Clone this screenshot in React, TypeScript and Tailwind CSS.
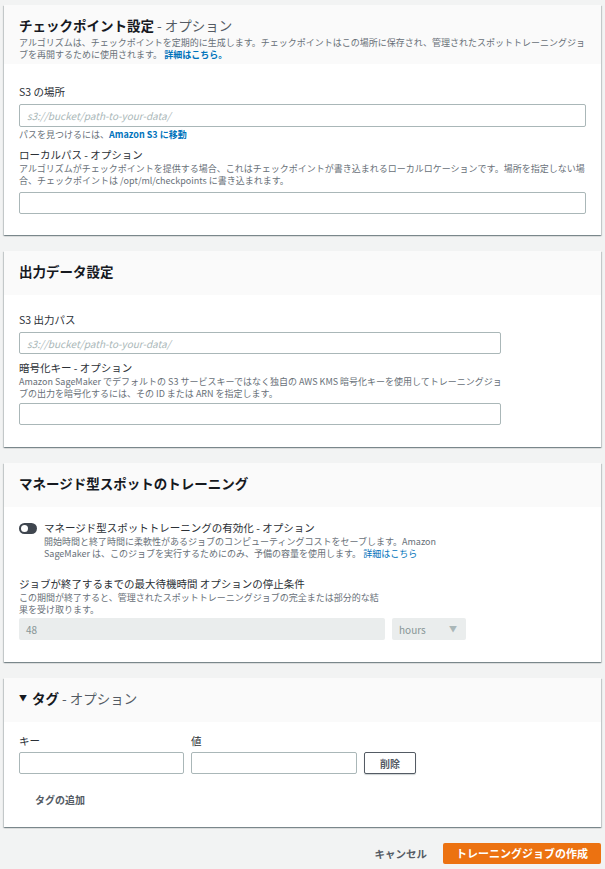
import React from 'react';

const Card: React.FC<{ header: React.ReactNode; headerClass?: string; bodyClass?: string; children: React.ReactNode }> = ({
  header,
  headerClass = 'pt-[11px] pb-[15px]',
  bodyClass = '',
  children,
}) => (
  <section className="bg-white shadow-[0_1px_1px_0_rgba(0,28,36,0.3),1px_1px_1px_0_rgba(0,28,36,0.15),-1px_1px_1px_0_rgba(0,28,36,0.15)]">
    <div className={`bg-[#fafafa] px-[15px] ${headerClass}`}>{header}</div>
    <div className={`px-[15px] ${bodyClass}`}>{children}</div>
  </section>
);

const Title: React.FC<{ main: string; opt?: boolean }> = ({ main, opt }) => (
  <h2 className="text-[13.5px] leading-[18px] font-bold text-[#16191f]">
    {main}
    {opt && <span className="font-normal text-[#545b64]"> - オプション</span>}
  </h2>
);

const Label: React.FC<{ children: React.ReactNode; className?: string }> = ({ children, className = '' }) => (
  <div className={`text-[10.5px] leading-[14px] text-[#2b3036] ${className}`}>{children}</div>
);

const Desc: React.FC<{ children: React.ReactNode; className?: string }> = ({ children, className = '' }) => (
  <p className={`text-[9px] leading-[11.5px] text-[#687078] whitespace-nowrap ${className}`}>{children}</p>
);

const Input: React.FC<{ className?: string; placeholder?: string }> = ({ className = '', placeholder }) => (
  <input
    placeholder={placeholder}
    className={`block h-[22px] border border-[#aab7b8] rounded-[2px] bg-white px-[7px] text-[10px] text-[#16191f] placeholder:italic placeholder:text-[#aab7b8] outline-none ${className}`}
  />
);

export default function App() {
  return (
    <div className="min-h-screen bg-[#f2f3f3] px-[4px] pt-[5px] pb-[5px] font-['Noto_Sans_CJK_JP',sans-serif]">
      <div className="flex flex-col gap-[16px]">
        <Card
          headerClass="pt-[11px] pb-[4px]"
          bodyClass="pt-[21px] pb-[21px]"
          header={
            <>
              <Title main="チェックポイント設定" opt />
              <Desc className="mt-[3px]">
                アルゴリズムは、チェックポイントを定期的に生成します。チェックポイントはこの場所に保存され、管理されたスポットトレーニングジョ
                <br />
                ブを再開するために使用されます。 <span className="font-bold text-[#0073bb]">詳細はこちら。</span>
              </Desc>
            </>
          }
        >
          <Label>S3 の場所</Label>
          <Input className="mt-[5px] w-full h-[23px]" placeholder="s3://bucket/path-to-your-data/" />
          <Desc className="mt-[2px] leading-[12px]">
            パスを見つけるには、<span className="font-bold text-[#0073bb]">Amazon S3 に移動</span>
          </Desc>
          <Label className="mt-[7px]">ローカルパス - オプション</Label>
          <Desc className="mt-[1px] leading-[12px]">
            アルゴリズムがチェックポイントを提供する場合、これはチェックポイントが書き込まれるローカルロケーションです。場所を指定しない場
            <br />
            合、チェックポイントは /opt/ml/checkpoints に書き込まれます。
          </Desc>
          <Input className="mt-[5px] w-full" />
        </Card>

        <Card header={<Title main="出力データ設定" />} bodyClass="pt-[18px] pb-[22px]">
          <Label>S3 出力パス</Label>
          <Input className="mt-[5px] w-[482px]" placeholder="s3://bucket/path-to-your-data/" />
          <Label className="mt-[7px]">暗号化キー - オプション</Label>
          <Desc className="mt-[1px]">
            Amazon SageMaker でデフォルトの S3 サービスキーではなく独自の AWS KMS 暗号化キーを使用してトレーニングジョ
            <br />
            ブの出力を暗号化するには、その ID または ARN を指定します。
          </Desc>
          <Input className="mt-[4px] w-[482px]" />
        </Card>

        <Card header={<Title main="マネージド型スポットのトレーニング" />} bodyClass="pt-[14px] pb-[22px]">
          <div className="flex gap-[7px]">
            <div className="mt-[1.5px] w-[18px] h-[11px] rounded-full bg-[#3f464f] flex items-center px-[2px] shrink-0">
              <div className="w-[7px] h-[7px] rounded-full bg-white" />
            </div>
            <div>
              <Label>マネージド型スポットトレーニングの有効化 - オプション</Label>
              <Desc className="mt-[1px] leading-[12px]">
                開始時間と終了時間に柔軟性があるジョブのコンピューティングコストをセーブします。Amazon
                <br />
                SageMaker は、このジョブを実行するためにのみ、予備の容量を使用します。 <span className="text-[#0073bb]">詳細はこちら</span>
              </Desc>
            </div>
          </div>
          <Label className="mt-[17px]">ジョブが終了するまでの最大待機時間 オプションの停止条件</Label>
          <Desc className="mt-[1px]">
            この期間が終了すると、管理されたスポットトレーニングジョブの完全または部分的な結
            <br />
            果を受け取ります。
          </Desc>
          <div className="mt-[3px] flex gap-[7px]">
            <div className="w-[366px] h-[22px] rounded-[2px] bg-[#eaeded] px-[7px] flex items-center text-[10px] text-[#879596]">
              48
            </div>
            <div className="w-[74px] h-[22px] rounded-[2px] bg-[#eaeded] pl-[7px] pr-[9px] flex items-center justify-between text-[10px] text-[#879596]">
              <span>hours</span>
              <span className="text-[8px] text-[#aab7b8]">▼</span>
            </div>
          </div>
        </Card>

        <Card
          header={
            <h2 className="text-[13.5px] leading-[18px] font-bold text-[#16191f] flex items-center">
              <span className="text-[8px] mr-[5px]">▼</span>
              タグ<span className="font-normal text-[#545b64]">&nbsp;- オプション</span>
            </h2>
          }
          bodyClass="pt-[12px] pb-[20px]"
        >
          <div className="flex gap-[7px] items-end">
            <div className="w-[165px]">
              <Label>キー</Label>
              <Input className="mt-[4px] w-full" />
            </div>
            <div className="w-[166px]">
              <Label>値</Label>
              <Input className="mt-[4px] w-full" />
            </div>
            <button className="block w-[52px] h-[22px] border border-[#545b64] rounded-[2px] bg-white text-[10px] font-bold text-[#545b64] shadow-[0_1px_1px_0_rgba(0,28,36,0.2)]">
              削除
            </button>
          </div>
          <button className="block mt-[19px] ml-[16px] text-[10px] leading-[14px] font-bold text-[#545b64]">タグの追加</button>
        </Card>
      </div>

      <div className="mt-[16px] flex justify-end items-center gap-[16px]">
        <button className="block text-[10.5px] leading-[14px] font-bold text-[#545b64]">キャンセル</button>
        <button className="block w-[158px] h-[21px] rounded-[2px] bg-[#ec7211] text-[11px] font-bold text-white">
          トレーニングジョブの作成
        </button>
      </div>
    </div>
  );
}
